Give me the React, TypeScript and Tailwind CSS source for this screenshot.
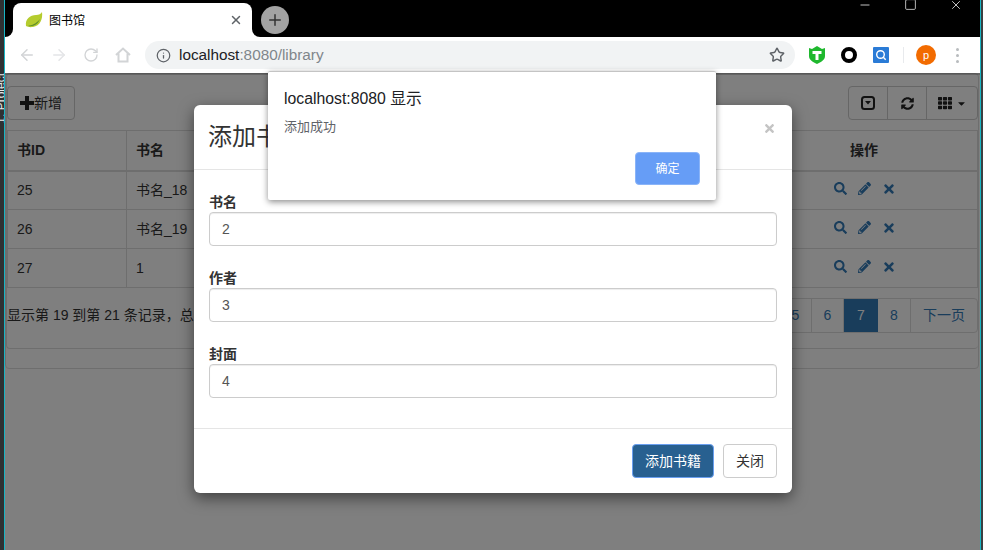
import { ArrowLeft, ArrowRight, RotateCw, Info, Star, X, Plus, Minus, Square } from "lucide-react";
import { FaSearch, FaPencilAlt, FaTimes, FaTh, FaSyncAlt, FaCaretDown } from "react-icons/fa";

const rows = [
  ["25", "书名_18"],
  ["26", "书名_19"],
  ["27", "1"],
];

function Leaf() {
  return (
    <svg width="18" height="16" viewBox="0 0 18 16">
      <path d="M1 14C0 7 5 3 11 3c3 0 5-1 6-3 1 7-2 14-9 15-3 .4-5 0-7-1z" fill="#b5cc2e" />
      <path d="M3 14c4-1 8-2 12-7-2 5-6 8-12 7z" fill="#5f8f2a" />
    </svg>
  );
}

function Shield() {
  return (
    <svg width="16" height="18" viewBox="0 0 16 18">
      <path d="M0 2l3 1 5-3 5 3 3-1v8c0 4-4 6-8 8-4-2-8-4-8-8z" fill="#1fb82e" />
      <path d="M3.5 5h9v3h-3v6h-3V8h-3z" fill="#fff" />
    </svg>
  );
}

function CollapseIcon() {
  return (
    <svg width="14" height="14" viewBox="0 0 14 14">
      <rect x="1" y="1" width="12" height="12" rx="2.5" fill="none" stroke="#222" strokeWidth="2" />
      <path d="M4 5h6l-3 3.5z" fill="#222" />
    </svg>
  );
}

function HomeOutline() {
  return (
    <svg width="16" height="16" viewBox="0 0 16 16" fill="none" stroke="#d2d4d6" strokeWidth="2">
      <path d="M1 8l7-6.5L15 8M3.5 6.5V14.5h9V6.5" />
    </svg>
  );
}

function SolidPlus() {
  return (
    <svg width="14" height="14" viewBox="0 0 14 14">
      <path d="M5 0h4v5h5v4H9v5H5V9H0V5h5z" fill="#222" />
    </svg>
  );
}

function BlueSearch() {
  return (
    <svg width="16" height="16" viewBox="0 0 16 16">
      <rect width="16" height="16" rx="1" fill="#2a7bd6" />
      <circle cx="7.5" cy="7.5" r="3.8" fill="none" stroke="#fff" strokeWidth="1.4" />
      <path d="M10.3 10.3l2.4 2.4" stroke="#fff" strokeWidth="1.4" />
    </svg>
  );
}

function Field({ label, value }: { label: string; value: string }) {
  return (
    <div className="mb-[22px]">
      <label className="block h-[20px] text-[14px] leading-[20px] font-bold text-[#333]">{label}</label>
      <div className="h-[34px] border border-[#ccc] rounded-[4px] px-3 flex items-center text-[14px] text-[#555] shadow-[inset_0_1px_1px_rgba(0,0,0,0.075)]">
        {value}
      </div>
    </div>
  );
}

export default function App() {
  return (
    <div className="relative w-[983px] h-[550px] overflow-hidden flex bg-black font-['Liberation_Sans','Noto_Sans_CJK_SC',sans-serif]">
      {/* editor strip on the left */}
      <div className="w-[5px] h-full bg-[#2f3133] border-r border-[#19b5c4] relative overflow-hidden shrink-0">
        <span className="absolute left-[-5px] top-[73px] text-[12px] leading-[12px] text-[#e8e8e8] whitespace-nowrap [writing-mode:vertical-rl] rotate-180">1: Project</span>
      </div>

      {/* browser */}
      <div className="w-[975px] h-full flex flex-col shrink-0 bg-white">
        {/* tab strip */}
        <div className="h-[37px] bg-black flex items-end pl-[8px] shrink-0 relative">
          <div className="relative w-[239px] h-[34px] bg-white rounded-t-[8px] flex items-center pl-[12px] pr-[9px]">
            <div className="absolute left-[-8px] bottom-0 w-[8px] h-[8px] bg-white">
              <div className="w-full h-full bg-black rounded-br-[8px]" />
            </div>
            <div className="absolute right-[-8px] bottom-0 w-[8px] h-[8px] bg-white">
              <div className="w-full h-full bg-black rounded-bl-[8px]" />
            </div>
            <Leaf />
            <span className="ml-[6px] mt-[1px] flex-1 text-[12px] text-black">图书馆</span>
            <X size={14} strokeWidth={2.5} className="text-[#5f6368]" />
          </div>
          <div className="ml-[9px] mb-[3px] w-[28px] h-[28px] rounded-full bg-[#a3a3a3] flex items-center justify-center">
            <Plus size={18} strokeWidth={2} className="text-[#333]" />
          </div>
          <div className="flex-1 self-start flex justify-end gap-[32px] pr-[17px] text-white">
            <Minus size={14} strokeWidth={1.3} className="mt-[-2px] h-[14px]" />
            <Square size={13} strokeWidth={1.3} className="mt-[-2px]" />
            <X size={14} strokeWidth={1.3} className="mt-[-2px]" />
          </div>
        </div>

        {/* toolbar */}
        <div className="h-[36px] bg-white flex items-center pl-[13px] shrink-0">
          <ArrowLeft size={18} strokeWidth={2} className="text-[#d2d4d6]" />
          <ArrowRight size={18} strokeWidth={2} className="ml-[14px] text-[#e4e5e7]" />
          <RotateCw size={16} strokeWidth={2} className="ml-[15px] text-[#d2d4d6]" />
          <div className="ml-[16px]"><HomeOutline /></div>
          <div className="ml-[14px] w-[650px] h-[28px] rounded-full bg-[#f1f3f4] flex items-center pl-[11px] pr-[10px]">
            <Info size={15} strokeWidth={2} className="text-[#5f6368]" />
            <span className="ml-[8px] flex-1 text-[15.3px]">
              <span className="text-[#202124]">localhost</span>
              <span className="text-[#80868b]">:8080/library</span>
            </span>
            <Star size={16} strokeWidth={2.2} className="text-[#5f6368]" />
          </div>
          <div className="ml-[14px] flex items-center">
            <Shield />
            <div className="ml-[16px] w-[16px] h-[16px] rounded-full border-[4px] border-black" />
            <div className="ml-[16px]"><BlueSearch /></div>
            <div className="ml-[14px] w-px h-[16px] bg-[#e8eaed]" />
            <div className="ml-[12px] w-[20px] h-[20px] rounded-full bg-[#f26b00] text-white text-[11px] flex items-center justify-center">p</div>
            <div className="ml-[20px] flex flex-col gap-[3px]">
              <div className="w-[3px] h-[3px] rounded-full bg-[#b8bbbe]" />
              <div className="w-[3px] h-[3px] rounded-full bg-[#b8bbbe]" />
              <div className="w-[3px] h-[3px] rounded-full bg-[#b8bbbe]" />
            </div>
          </div>
        </div>

        {/* page */}
        <div className="flex-1 relative bg-white">
          <div className="absolute inset-x-0 top-0 h-[2px] bg-black/20 z-10" />
          <div className="border border-[#ddd] rounded-[4px] h-[296px] mr-[1px]">
            <div className="border-b border-l border-[#ddd] rounded-[4px] h-[275px] pt-[12px]">
              <div className="flex justify-between mb-[10px]">
                <button className="h-[34px] w-[68px] border border-[#ccc] rounded-[4px] flex items-center justify-center text-[14px] text-[#333]">
                  <SolidPlus />
                  <span>新增</span>
                </button>
                <div className="flex h-[34px] border border-[#ccc] rounded-[4px] w-[130px]">
                  <div className="w-[39px] flex items-center justify-center border-r border-[#ccc]"><CollapseIcon /></div>
                  <div className="w-[39px] flex items-center justify-center border-r border-[#ccc]"><FaSyncAlt size={13} color="#222" /></div>
                  <div className="flex-1 flex items-center justify-center gap-[4px]"><FaTh size={14} color="#222" /><FaCaretDown size={11} color="#222" /></div>
                </div>
              </div>
              <table className="w-[971px] border-collapse text-[14px] text-[#333]">
                <thead>
                  <tr className="h-[40px] font-bold">
                    <th className="w-[119px] border border-[#ddd] border-b-2 pl-[9px] text-left">书ID</th>
                    <th className="w-[624px] border border-[#ddd] border-b-2 pl-[9px] text-left">书名</th>
                    <th className="border border-[#ddd] border-b-2 text-center">操作</th>
                  </tr>
                </thead>
                <tbody>
                  {rows.map(([id, name]) => (
                    <tr key={id} className="h-[39px]">
                      <td className="border border-[#ddd] pl-[9px]">{id}</td>
                      <td className="border border-[#ddd] pl-[9px]">{name}</td>
                      <td className="border border-[#ddd]">
                        <div className="flex justify-center gap-[11px] text-[#337ab7] -translate-y-px translate-x-px">
                          <FaSearch size={13} />
                          <FaPencilAlt size={13} />
                          <FaTimes size={14} />
                        </div>
                      </td>
                    </tr>
                  ))}
                </tbody>
              </table>
              <div className="flex justify-between mt-[10px] text-[14px]">
                <span className="leading-[35px] text-[#333]">显示第 19 到第 21 条记录，总共 21 条记录</span>
                <div className="flex h-[35px] text-[#337ab7] border border-[#ddd] rounded-[4px]">
                  <span className="w-[32px] flex items-center justify-center border-r border-[#ddd]">5</span>
                  <span className="w-[32px] flex items-center justify-center border-r border-[#ddd]">6</span>
                  <span className="w-[34px] flex items-center justify-center bg-[#337ab7] text-white">7</span>
                  <span className="w-[33px] flex items-center justify-center border-r border-[#ddd]">8</span>
                  <span className="w-[66px] flex items-center justify-center">下一页</span>
                </div>
              </div>
            </div>
          </div>

          {/* backdrop */}
          <div className="absolute inset-0 bg-black/50" />

          {/* modal */}
          <div className="absolute left-[189px] top-[32px] w-[598px] h-[388px] bg-white rounded-[6px] shadow-[0_5px_15px_rgba(0,0,0,0.5)] flex flex-col">
            <div className="h-[65px] border-b border-[#e5e5e5] flex items-center justify-between pl-[14px] pr-[16px] shrink-0">
              <span className="text-[24px] text-[#333]">添加书籍</span>
              <FaTimes size={13} className="text-[#c4c4c4] self-start mt-[17px]" />
            </div>
            <div className="h-[258px] px-[15px] pt-[22px] shrink-0">
              <Field label="书名" value="2" />
              <Field label="作者" value="3" />
              <Field label="封面" value="4" />
            </div>
            <div className="flex-1 border-t border-[#e5e5e5] flex justify-end items-start pt-[15px] pr-[15px] gap-[9px]">
              <button className="w-[82px] h-[34px] rounded-[4px] bg-[#286090] border border-[#6a9ff0] text-white text-[14px]">添加书籍</button>
              <button className="w-[54px] h-[34px] rounded-[4px] bg-white border border-[#ccc] text-[#333] text-[14px]">关闭</button>
            </div>
          </div>
        </div>
      </div>

      {/* desktop edge on the right */}
      <div className="w-[3px] h-full bg-[#3c3f41] border-l border-[#19b5c4] shrink-0" />

      {/* alert */}
      <div className="absolute z-20 left-[268px] top-[71px] w-[448px] h-[129px] bg-white border-t border-[#c4c4c4] rounded-[2px] shadow-[0_2px_6px_rgba(0,0,0,0.45)] px-[16px] pt-[17px]">
        <div className="text-[15.8px] leading-[20px] text-[#202124]">localhost:8080 显示</div>
        <div className="mt-[9px] text-[13px] leading-[18px] text-[#5f6368]">添加成功</div>
        <div className="flex justify-end mt-[16px]">
          <button className="w-[65px] h-[33px] rounded-[4px] bg-[#669df6] border border-[#8ab4f8] text-white text-[12px]">确定</button>
        </div>
      </div>
    </div>
  );
}
